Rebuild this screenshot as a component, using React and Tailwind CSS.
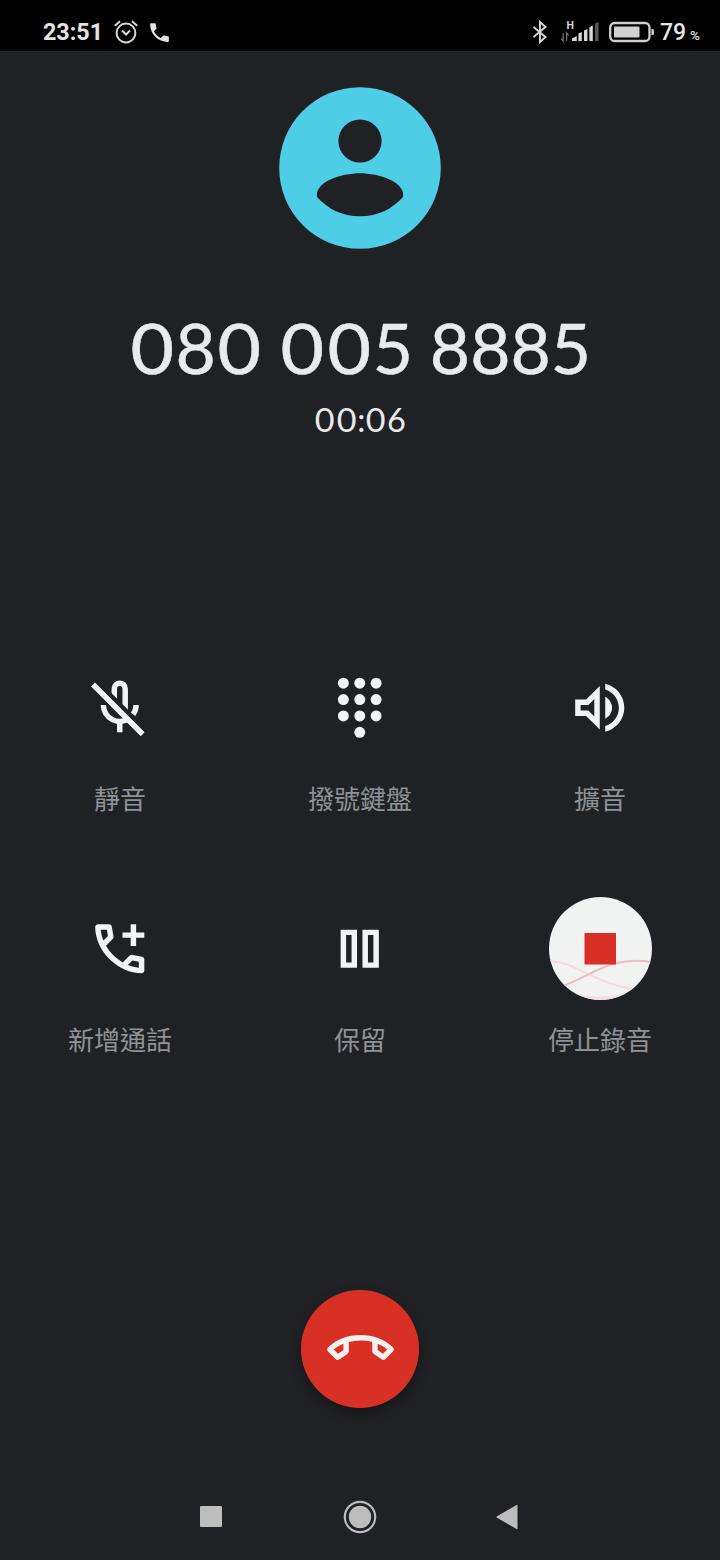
import React from 'react';

const PHONE_OUTLINE =
  'M19.95 21Q16.825 21 13.775 19.637Q10.725 18.275 8.225 15.775Q5.725 13.275 4.362 10.225Q3 7.175 3 4.05Q3 3.6 3.3 3.3Q3.6 3 4.05 3H8.1Q8.45 3 8.725 3.237Q9 3.475 9.05 3.8L9.7 7.3Q9.75 7.7 9.675 7.975Q9.6 8.25 9.4 8.45L6.975 10.9Q7.475 11.825 8.162 12.688Q8.85 13.55 9.675 14.35Q10.45 15.125 11.3 15.788Q12.15 16.45 13.1 17L15.45 14.65Q15.675 14.425 16.038 14.312Q16.4 14.2 16.75 14.25L20.2 14.95Q20.55 15.05 20.775 15.312Q21 15.575 21 15.9V19.95Q21 20.4 20.7 20.7Q20.4 21 19.95 21ZM6.025 9 7.675 7.35 7.25 5H5.025Q5.15 6.025 5.375 7.025Q5.6 8.025 6.025 9ZM14.975 17.95Q15.95 18.375 16.963 18.625Q17.975 18.875 19 18.95V16.75L16.65 16.275Z';

const ActionIcon = ({ children }) => (
  <svg viewBox="0 0 24 24" className="mb-[0.5px] h-[65.5px] w-[65.5px]" fill="#f1f3f4">
    {children}
  </svg>
);

const MicOffIcon = () => (
  <ActionIcon>
    <g fill="none" stroke="#f1f3f4" strokeWidth="2">
      <path d="M10 9V5a2 2 0 0 1 4 0v8" />
      <path d="M6 11a6 6 0 0 0 9.6 4.8" />
      <path d="M18 11q0 1.9-1.1 3.4" />
      <path d="M12 17v4" />
      <path d="M3.3 2.7l18.3 18.3" stroke="#202124" strokeWidth="2.4" />
      <path d="M2.2 3.5l18.2 18.2" />
    </g>
  </ActionIcon>
);

const DialpadIcon = () => (
  <ActionIcon>
    {[3, 9, 15].map((y) => [6, 12, 18].map((x) => <circle key={`${x}-${y}`} cx={x} cy={y} r="2" />))}
    <circle cx="12" cy="21" r="2" />
  </ActionIcon>
);

const SpeakerIcon = () => (
  <ActionIcon>
    <path d="M3 9v6h4l5 5V4L7 9H3zm7-.17v6.34L7.83 13H5v-2h2.83L10 8.83zM16.5 12c0-1.77-1.02-3.29-2.5-4.03v8.05c1.48-.73 2.5-2.25 2.5-4.02zM14 3.23v2.06c2.89.86 5 3.54 5 6.71s-2.11 5.85-5 6.71v2.06c4.01-.91 7-4.49 7-8.77s-2.99-7.86-7-8.77z" />
  </ActionIcon>
);

const AddCallIcon = () => (
  <ActionIcon>
    <path d={PHONE_OUTLINE} />
    <path d="M16 3h2v3h3v2h-3v3h-2V8h-3V6h3z" />
  </ActionIcon>
);

const HoldIcon = () => (
  <ActionIcon>
    <path fillRule="evenodd" d="M5 5h6v14H5zM7 7v10h2V7zM13 5h6v14h-6zM15 7v10h2V7z" />
  </ActionIcon>
);

const StopRecordIcon = () => (
  <svg viewBox="0 0 103 103" className="h-[103px] w-[103px]">
    <clipPath id="record-disc">
      <circle cx="51.5" cy="51.5" r="51.5" />
    </clipPath>
    <g clipPath="url(#record-disc)">
      <rect width="103" height="103" fill="#f1f3f2" />
      <path d="M16 95Q50 104 90 94V103H16z" fill="#f1dfe3" />
      <path d="M0 64C28 65 44 86 84 92" fill="none" stroke="#f3d9dc" strokeWidth="1.8" />
      <path d="M14 89C42 79 62 58 103 65" fill="none" stroke="#edbcc3" strokeWidth="2" />
      <rect x="35.5" y="36" width="31.5" height="31.5" fill="#d93025" />
    </g>
  </svg>
);

const actions = [
  { label: '靜音', icon: <MicOffIcon /> },
  { label: '撥號鍵盤', icon: <DialpadIcon /> },
  { label: '擴音', icon: <SpeakerIcon /> },
  { label: '新增通話', icon: <AddCallIcon /> },
  { label: '保留', icon: <HoldIcon /> },
  { label: '停止錄音', icon: <StopRecordIcon /> },
];

const StatusBar = () => (
  <header className="flex h-[51px] items-center bg-black pt-[13px] pr-[19px] pl-[43px] font-[Roboto,sans-serif] text-[#e4e4e4]">
    <span className="mt-px w-[70px] text-[23.3px] leading-none font-bold">23:51</span>
    <svg viewBox="0 0 26 26" className="h-[26px] w-[26px]" fill="none" stroke="#d8d8d8" strokeWidth="2">
      <circle cx="13" cy="14" r="9.4" />
      <path d="M9 11.5l4 4 4-4M1.8 6.8l5.2-4.6M24.2 6.8l-5.2-4.6" />
    </svg>
    <svg viewBox="0 0 24 24" className="ml-2 h-[25px] w-[25px]" fill="#e4e4e4">
      <path d="M6.62 10.79c1.44 2.83 3.76 5.14 6.59 6.59l2.2-2.2c.27-.27.67-.36 1.02-.24 1.12.37 2.33.57 3.57.57.55 0 1 .45 1 1V20c0 .55-.45 1-1 1-9.39 0-17-7.61-17-17 0-.55.45-1 1-1h3.5c.55 0 1 .45 1 1 0 1.25.2 2.45.57 3.57.11.35.03.74-.25 1.02l-2.2 2.2z" />
    </svg>
    <div className="ml-auto flex items-center">
      <svg viewBox="0 0 16 24" className="h-6 w-4" fill="none" stroke="#d8d8d8" strokeWidth="1.9">
        <path d="M1.5 7l12 10L8 22V2l5.500 5L1.500 17" />
      </svg>
      <svg viewBox="0 0 40 24" className="ml-3 h-6 w-10" fill="#d8d8d8">
        <text x="6.5" y="8.6" fontSize="10.5" fontWeight="700" fontFamily="Roboto">H</text>
        <path d="M3.2 13v8l-2-2.4M6.600 21v-8l2 2.400" fill="none" stroke="#777" strokeWidth="1.2" />
        <path d="M12 21v-2.500l4.800-2.600V21zM18.400 21v-7.400l3.400-1.600v9zM24 21V10.600l3.400-1.600v12zM29.400 21V7.200l3.400-1.600V21z" />
        <path d="M35 21V3.600L38.600 2V21z" fill="#555" />
      </svg>
      <svg viewBox="0 0 46 22" className="ml-[9px] h-[22px] w-[46px]" fill="#d0d0d0">
        <rect x="1.2" y="2" width="39.3" height="18" rx="4.5" fill="none" stroke="#d0d0d0" strokeWidth="2.3" />
        <rect x="5" y="5.5" width="25.5" height="11" rx="1" />
        <path d="M42.5 8h1q1.5 0 1.5 1.5v3q0 1.5-1.5 1.5h-1z" />
      </svg>
      <span className="ml-[5px] w-[30px] text-[23px] leading-none font-medium">79</span>
      <span className="mt-[8px] w-[11px] text-[13.5px] leading-none font-medium">%</span>
    </div>
  </header>
);

const Avatar = () => (
  <svg viewBox="0 0 162 162" className="h-[162px] w-[162px]">
    <circle cx="81" cy="81" r="80.8" fill="#4dcee6" />
    <g fill="#202124">
      <circle cx="81" cy="54" r="21.6" />
      <path d="M38 110C35.5 95 62 86.3 81 86.3S126.5 95 124 110C113 122 99 129.3 81 129.3S49 122 38 110Z" />
    </g>
  </svg>
);

// Zeros are wider than the other digits in the number display
const Zero = () => <span className="inline-block w-[46.7px] scale-x-108 text-center">0</span>;
const SmallZero = () => <span className="inline-block w-[21.5px] scale-x-105 text-center">0</span>;

const App = () => (
  <div className="flex h-[1560px] w-[720px] flex-col overflow-hidden bg-[#202124]">
    <StatusBar />

    <section className="flex h-[585px] flex-col items-center pt-9 font-[Lato,sans-serif] text-[#e8eaed]">
      <Avatar />
      <h1 className="mt-14 text-[69.5px] leading-[84px] [word-spacing:-1px] whitespace-pre [-webkit-text-stroke:0.5px_#e8eaed]">
        <Zero />8<Zero /> <Zero /><Zero />5 8885
      </h1>
      <p className="mt-[11px] text-[32.5px] leading-10 whitespace-pre">
        <SmallZero /><SmallZero />:<SmallZero />6
      </p>
    </section>

    <section className="grid grid-cols-3">
      {actions.map((action) => (
        <button key={action.label} className="flex h-[241px] flex-col items-center pt-5">
          <span className="flex h-[103px] items-center justify-center">{action.icon}</span>
          <span className="mt-5 font-['Noto_Sans_CJK_TC',sans-serif] text-[26px] leading-[38px] font-normal text-[#8f9397]">
            {action.label}
          </span>
        </button>
      ))}
    </section>

    <div className="flex justify-center pt-[172px]">
      <button className="flex h-[117.5px] w-[117.5px] items-center justify-center rounded-full bg-[#d93025] shadow-[0_5px_12px_rgba(0,0,0,0.35)]">
        <svg viewBox="0 0 24 24" className="mt-[2px] h-[65px] w-[65px] rotate-135" fill="#f6f1f1">
          <path d={PHONE_OUTLINE} />
        </svg>
      </button>
    </div>

    <nav className="mt-auto flex h-[87px] items-center justify-between pr-[202px] pl-[200px]">
      <span className="h-[21.5px] w-[21.5px] rounded-[1px] bg-[#bdbdbd]" />
      <svg viewBox="0 0 34 34" className="ml-[3px] h-[34px] w-[34px]" fill="#bdbdbd">
        <circle cx="17" cy="17" r="15.2" fill="none" stroke="#bdbdbd" strokeWidth="2.2" />
        <circle cx="17" cy="17" r="11.2" />
      </svg>
      <svg viewBox="0 0 22 26" className="h-[26px] w-[22px]" fill="#bdbdbd">
        <path d="M1 12.2L20.5 1q1-.5 1 .6v22.8q0 1.1-1 .6L1 13.8q-1.2-.8 0-1.6z" />
      </svg>
    </nav>
  </div>
);

export default App;
